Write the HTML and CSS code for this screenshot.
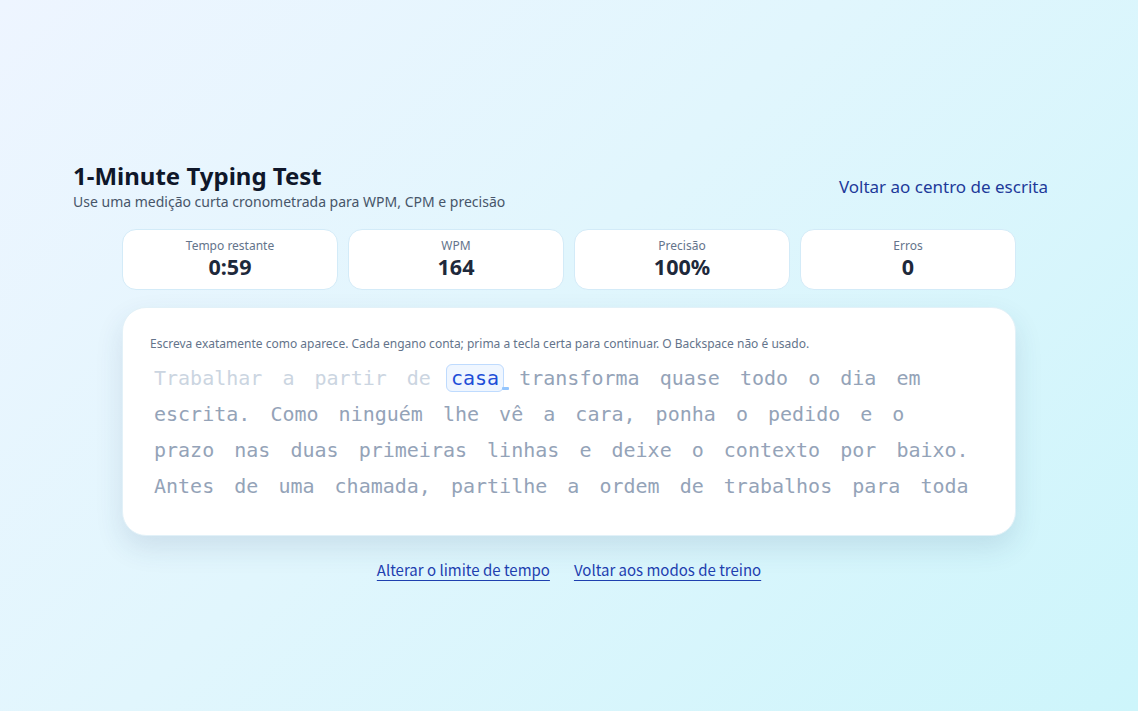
FILE: index.html
```html
<!DOCTYPE html>
<html lang="pt">
<head>
<meta charset="utf-8">
<title>1-Minute Typing Test</title>
<link rel="stylesheet" href="styles.css">
</head>
<body>
<div class="page">
  <header class="header">
    <div class="titles">
      <h1 class="title">1-Minute Typing Test</h1>
      <p class="subtitle">Use uma medição curta cronometrada para WPM, CPM e precisão</p>
    </div>
    <a class="back-link" href="#">Voltar ao centro de escrita</a>
  </header>
  <main class="main">
    <section class="stats">
      <div class="stat"><div class="stat-label">Tempo restante</div><div class="stat-value">0:59</div></div>
      <div class="stat"><div class="stat-label">WPM</div><div class="stat-value">164</div></div>
      <div class="stat"><div class="stat-label">Precisão</div><div class="stat-value">100%</div></div>
      <div class="stat"><div class="stat-label">Erros</div><div class="stat-value">0</div></div>
    </section>
    <section class="card">
      <p class="hint">Escreva exatamente como aparece. Cada engano conta; prima a tecla certa para continuar. O Backspace não é usado.</p>
      <div class="typing"><span class="w done">Trabalhar</span> <span class="w done">a</span> <span class="w done">partir</span> <span class="w done">de</span> <span class="w current">casa</span> <span class="w">transforma</span> <span class="w">quase</span> <span class="w">todo</span> <span class="w">o</span> <span class="w">dia</span> <span class="w">em</span> <span class="w">escrita.</span> <span class="w">Como</span> <span class="w">ninguém</span> <span class="w">lhe</span> <span class="w">vê</span> <span class="w">a</span> <span class="w">cara,</span> <span class="w">ponha</span> <span class="w">o</span> <span class="w">pedido</span> <span class="w">e</span> <span class="w">o</span> <span class="w">prazo</span> <span class="w">nas</span> <span class="w">duas</span> <span class="w">primeiras</span> <span class="w">linhas</span> <span class="w">e</span> <span class="w">deixe</span> <span class="w">o</span> <span class="w">contexto</span> <span class="w">por</span> <span class="w">baixo.</span> <span class="w">Antes</span> <span class="w">de</span> <span class="w">uma</span> <span class="w">chamada,</span> <span class="w">partilhe</span> <span class="w">a</span> <span class="w">ordem</span> <span class="w">de</span> <span class="w">trabalhos</span> <span class="w">para</span> <span class="w">toda</span></div>
    </section>
    <nav class="footer-links">
      <a class="foot-link" href="#">Alterar o limite de tempo</a>
      <a class="foot-link" href="#">Voltar aos modos de treino</a>
    </nav>
  </main>
</div>
</body>
</html>
```
FILE: styles.css
```css
* { box-sizing: border-box; }
html, body { margin: 0; }
body {
  min-height: 100vh;
  font-family: "Noto Sans", "Open Sans", sans-serif;
  background: linear-gradient(135deg, #eef5ff 0%, #e1f6fd 45%, #cdf5fb 100%);
  color: #0f172a;
}
.page {
  max-width: 1024px;
  margin: 0 auto;
  padding: 160px 16px 40px;
}
.header {
  display: flex;
  justify-content: space-between;
  align-items: center;
}
.title {
  margin: 0;
  font-size: 24px;
  line-height: 32px;
  font-weight: 700;
  color: #0f172a;
}
.subtitle {
  margin: 0;
  font-size: 14px;
  line-height: 20px;
  color: #475569;
}
.back-link {
  padding: 7px 17px 7px 16px;
  font-size: 17px;
  color: #1e3a9a;
  text-decoration: none;
}
.main {
  width: 894px;
  margin: 17px auto 0;
}
.stats {
  display: grid;
  grid-template-columns: repeat(4, 1fr);
  gap: 10px;
}
.stat {
  height: 61px;
  padding: 7px 8px 8px;
  background: #ffffff;
  border: 1px solid #d3ebf8;
  border-radius: 14px;
  text-align: center;
}
.stat-label {
  font-size: 12px;
  line-height: 17px;
  color: #64748b;
}
.stat-value {
  font-size: 21.5px;
  line-height: 26px;
  font-weight: 700;
  color: #1e293b;
}
.card {
  margin-top: 17px;
  height: 229px;
  padding: 27px 27px 28px;
  background: #ffffff;
  border: 1px solid #e2f1f8;
  border-radius: 24px;
  box-shadow: 0 12px 28px rgba(30, 64, 110, 0.12);
}
.hint {
  margin: 0 0 8px;
  font-size: 12px;
  line-height: 17px;
  color: #64748b;
}
.typing {
  padding: 0 6px 0 4px;
  font-family: "DejaVu Sans Mono", monospace;
  font-size: 20px;
  line-height: 36px;
  word-spacing: 8px;
  color: #94a3b8;
}
.w { word-spacing: normal; }
.done { color: #cbd5e1; }
.current {
  position: relative;
  margin: 0 -5px;
  padding: 1px 4px;
  border: 1px solid #bfdbfe;
  border-radius: 6px;
  background: #eff6ff;
  color: #1d4ed8;
}
.current::after {
  content: "";
  position: absolute;
  left: calc(100% - 1px);
  bottom: 1px;
  width: 7px;
  height: 3px;
  border-radius: 1px;
  background: #93c5fd;
}
.footer-links {
  display: flex;
  justify-content: center;
  gap: 24px;
  margin-top: 23px;
}
.foot-link {
  font-family: "Noto Sans CJK JP", "Noto Sans", sans-serif;
  font-size: 15px;
  line-height: 22px;
  color: #1e40af;
  text-decoration: underline;
  text-underline-offset: 4px;
}
```
